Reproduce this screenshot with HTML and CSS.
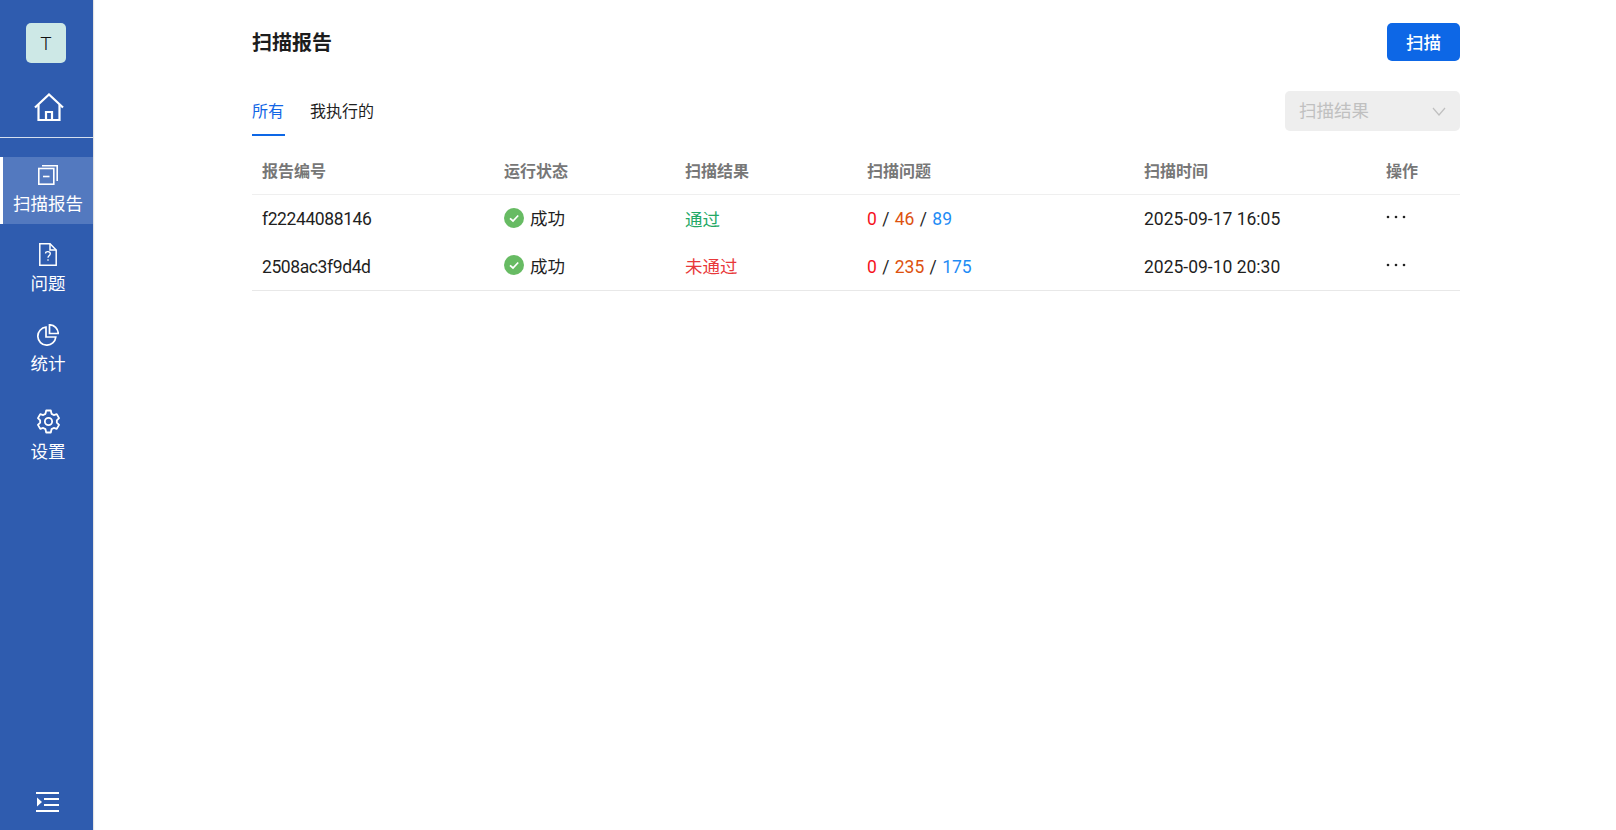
FILE: index.html
```html
<!DOCTYPE html>
<html lang="zh-CN">
<head>
<meta charset="utf-8">
<title>扫描报告</title>
<link rel="stylesheet" href="styles.css">
</head>
<body>
<div class="app">
  <aside class="sidebar">
    <div class="brand"><div class="avatar">T</div></div>
    <a class="home">
      <svg width="30" height="28" viewBox="0 0 30 28" fill="none" stroke="#fff" stroke-width="2.200"><path d="M1 14.500 15 1.500 29 14.500"/><path d="M4.500 11.500V27H25.500V11.500"/><path d="M12 27V19H18V27"/></svg>
    </a>
    <nav class="nav">
      <a class="nav-item active">
        <svg width="20" height="20" viewBox="0 0 20 20" fill="none" stroke="#fff" stroke-width="1.600"><rect x="0.800" y="3.500" width="15" height="15.700"/><path d="M4 0.800H19.200V16"/><path d="M5 11.500H11.500"/></svg>
        <span>扫描报告</span>
      </a>
      <a class="nav-item">
        <svg width="18" height="23" viewBox="0 0 18 23" fill="none" stroke="#fff" stroke-width="1.500"><path d="M0.800 0.800H11L17.200 7V22.200H0.800Z"/><path d="M11 0.800V7H17.200"/><path d="M6.500 10.500C6.700 8 11.300 8 11.300 10.800 11.300 12.500 9 12.500 9 14.800" stroke-width="1.300"/><path d="M9 16.200V17.700" stroke-width="1.300"/></svg>
        <span>问题</span>
      </a>
      <a class="nav-item">
        <svg width="22" height="22" viewBox="0 0 22 22" fill="none" stroke="#fff" stroke-width="1.700"><path d="M9 3.200A9 9 0 1 0 18.800 13H9Z"/><path d="M12.500 0.800A8.800 8.800 0 0 1 21.200 9.500H12.500Z"/></svg>
        <span>统计</span>
      </a>
      <a class="nav-item">
        <svg width="23" height="25" viewBox="0 0 24 26" fill="none" stroke="#fff" stroke-width="1.900"><path d="M9.600 1.500H14.400L15.200 5 17.500 6.300 20.600 5.300 23 9.500 20.700 11.800V14.200L23 16.500 20.600 20.700 17.500 19.700 15.200 21 14.400 24.500H9.600L8.800 21 6.500 19.700 3.400 20.700 1 16.500 3.300 14.200V11.800L1 9.500 3.400 5.300 6.500 6.300 8.800 5Z" stroke-linejoin="round"/><circle cx="12" cy="13" r="3.800"/></svg>
        <span>设置</span>
      </a>
    </nav>
    <a class="collapse">
      <svg width="23" height="20" viewBox="0 0 23 20" fill="#fff"><rect x="0" y="0" width="23" height="2"/><rect x="8" y="6" width="15" height="2"/><rect x="8" y="12" width="15" height="2"/><rect x="0" y="18" width="23" height="2"/><path d="M1 5.500 6 10 1 14.500Z"/></svg>
    </a>
  </aside>
  <main class="main">
    <header class="page-head">
      <h1>扫描报告</h1>
      <button class="scan-btn">扫描</button>
    </header>
    <div class="toolbar">
      <div class="tabs">
        <a class="tab active">所有</a>
        <a class="tab">我执行的</a>
      </div>
      <div class="select">
        <span>扫描结果</span>
        <svg class="chevron" width="14" height="9" viewBox="0 0 14 9" fill="none" stroke="#bfbfbf" stroke-width="1.200"><path d="M1 1 7 8 13 1"/></svg>
      </div>
    </div>
    <table class="report-table">
      <thead>
        <tr><th class="c1">报告编号</th><th class="c2">运行状态</th><th class="c3">扫描结果</th><th class="c4">扫描问题</th><th class="c5">扫描时间</th><th>操作</th></tr>
      </thead>
      <tbody>
        <tr>
          <td class="id">f22244088146</td>
          <td class="cjk"><span class="status"><svg class="ok" width="20" height="20" viewBox="0 0 20 20"><circle cx="10" cy="10" r="10" fill="#67bb63"/><path d="M6 10.300 9 13 14.200 7.500" fill="none" stroke="#fff" stroke-width="1.700"/></svg>成功</span></td>
          <td class="cjk pass">通过</td>
          <td class="counts"><span class="red">0</span> / <span class="orange">46</span> / <span class="blue">89</span></td>
          <td>2025-09-17 16:05</td>
          <td class="more"><svg width="20" height="4" viewBox="0 0 20 4" fill="#222"><circle cx="2" cy="2" r="1.300"/><circle cx="10" cy="2" r="1.300"/><circle cx="18" cy="2" r="1.300"/></svg></td>
        </tr>
        <tr>
          <td class="id">2508ac3f9d4d</td>
          <td class="cjk"><span class="status"><svg class="ok" width="20" height="20" viewBox="0 0 20 20"><circle cx="10" cy="10" r="10" fill="#67bb63"/><path d="M6 10.300 9 13 14.200 7.500" fill="none" stroke="#fff" stroke-width="1.700"/></svg>成功</span></td>
          <td class="cjk fail">未通过</td>
          <td class="counts"><span class="red">0</span> / <span class="orange">235</span> / <span class="blue">175</span></td>
          <td>2025-09-10 20:30</td>
          <td class="more"><svg width="20" height="4" viewBox="0 0 20 4" fill="#222"><circle cx="2" cy="2" r="1.300"/><circle cx="10" cy="2" r="1.300"/><circle cx="18" cy="2" r="1.300"/></svg></td>
        </tr>
      </tbody>
    </table>
  </main>
</div>
</body>
</html>
```
FILE: styles.css
```css
* { box-sizing: border-box; }
html, body { margin: 0; height: 100%; overflow: hidden; }
body {
  font-family: Roboto, "Noto Sans CJK SC", sans-serif;
  color: #1f1f1f;
  background: #fff;
}
.app { display: flex; height: 100vh; overflow: hidden; }
.sidebar {
  width: 93px;
  flex: none;
  background: #2f5caf;
  color: #fff;
  display: flex;
  flex-direction: column;
  box-shadow: 1px 0 1px #e4e4e4;
}
.brand { padding: 23px 0 0 26px; }
.avatar {
  width: 40px;
  height: 40px;
  border-radius: 5px;
  background: #cde8e6;
  color: #111;
  font-size: 19px;
  font-weight: 300;
  display: flex;
  align-items: center;
  justify-content: center;
}
.home {
  margin-top: 30px;
  height: 45px;
  padding-left: 4px;
  display: flex;
  justify-content: center;
  border-bottom: 1px solid #d5dfef;
}
.nav { margin-top: 19px; display: flex; flex-direction: column; gap: 11px; }
.nav-item {
  padding: 8px 0 9px 3px;
  display: flex;
  flex-direction: column;
  align-items: center;
  gap: 6px;
  font-size: 17.500px;
  line-height: 24px;
}
.nav-item:last-child { margin-top: 5px; }
.nav-item svg { display: block; }
.nav-item.active { background: #5379bf; border-left: 3px solid #fff; padding: 8px 0; gap: 7px; }
.collapse { margin-top: auto; margin-bottom: 18px; padding-left: 2px; display: flex; justify-content: center; }
.main { flex: 1; padding: 23px 156px 0 159px; }
.page-head { display: flex; justify-content: space-between; align-items: center; height: 38px; }
h1 { margin: 0; padding-top: 2px; font-size: 20px; font-weight: 700; line-height: 36px; color: #1c1c1c; }
.scan-btn {
  width: 73px;
  height: 38px;
  border: 0;
  border-radius: 5px;
  background: #0d67e6;
  color: #fff;
  font: 500 17.500px/34px Roboto, "Noto Sans CJK SC", sans-serif;
  padding: 1px 0 0;
}
.toolbar { margin-top: 30px; display: flex; justify-content: space-between; align-items: flex-start; }
.tabs { display: flex; gap: 25px; height: 45px; }
.tab { font-size: 16px; line-height: 42px; height: 45px; color: #1f1f1f; }
.tab.active { color: #1366e6; border-bottom: 2px solid #0d67e6; width: 33px; }
.select {
  width: 175px;
  height: 40px;
  border-radius: 5px;
  background: #eeeeee;
  color: #c0c0c0;
  font-size: 17.500px;
  padding: 0 14px 3px;
  display: flex;
  align-items: center;
  justify-content: space-between;
}
.chevron { margin-top: 4px; }
.report-table {
  width: 100%;
  margin-top: 14px;
  border-collapse: collapse;
  table-layout: fixed;
  font-size: 17.500px;
  border-bottom: 1px solid #e8e8e8;
}
th {
  text-align: left;
  font-size: 16px;
  font-weight: 700;
  color: #777;
  height: 44px;
  padding: 0 10px 4px;
  border-bottom: 1px solid #efefef;
}
td { height: 48px; padding: 2px 10px 0; color: #1f1f1f; }
td.cjk { padding-top: 0; }
.id { letter-spacing: -0.400px; }
.c1 { width: 242px; }
.c2 { width: 181px; }
.c3 { width: 182px; }
.c4 { width: 277px; }
.c5 { width: 242px; }
.status { display: inline-flex; align-items: center; gap: 6px; }
.counts { word-spacing: 1px; }
.pass { color: #23a865; }
.fail { color: #e8383a; }
.red { color: #f5121c; }
.orange { color: #dd5210; }
.blue { color: #1f8cf5; }
.more svg { display: block; margin-top: -4px; }
```
